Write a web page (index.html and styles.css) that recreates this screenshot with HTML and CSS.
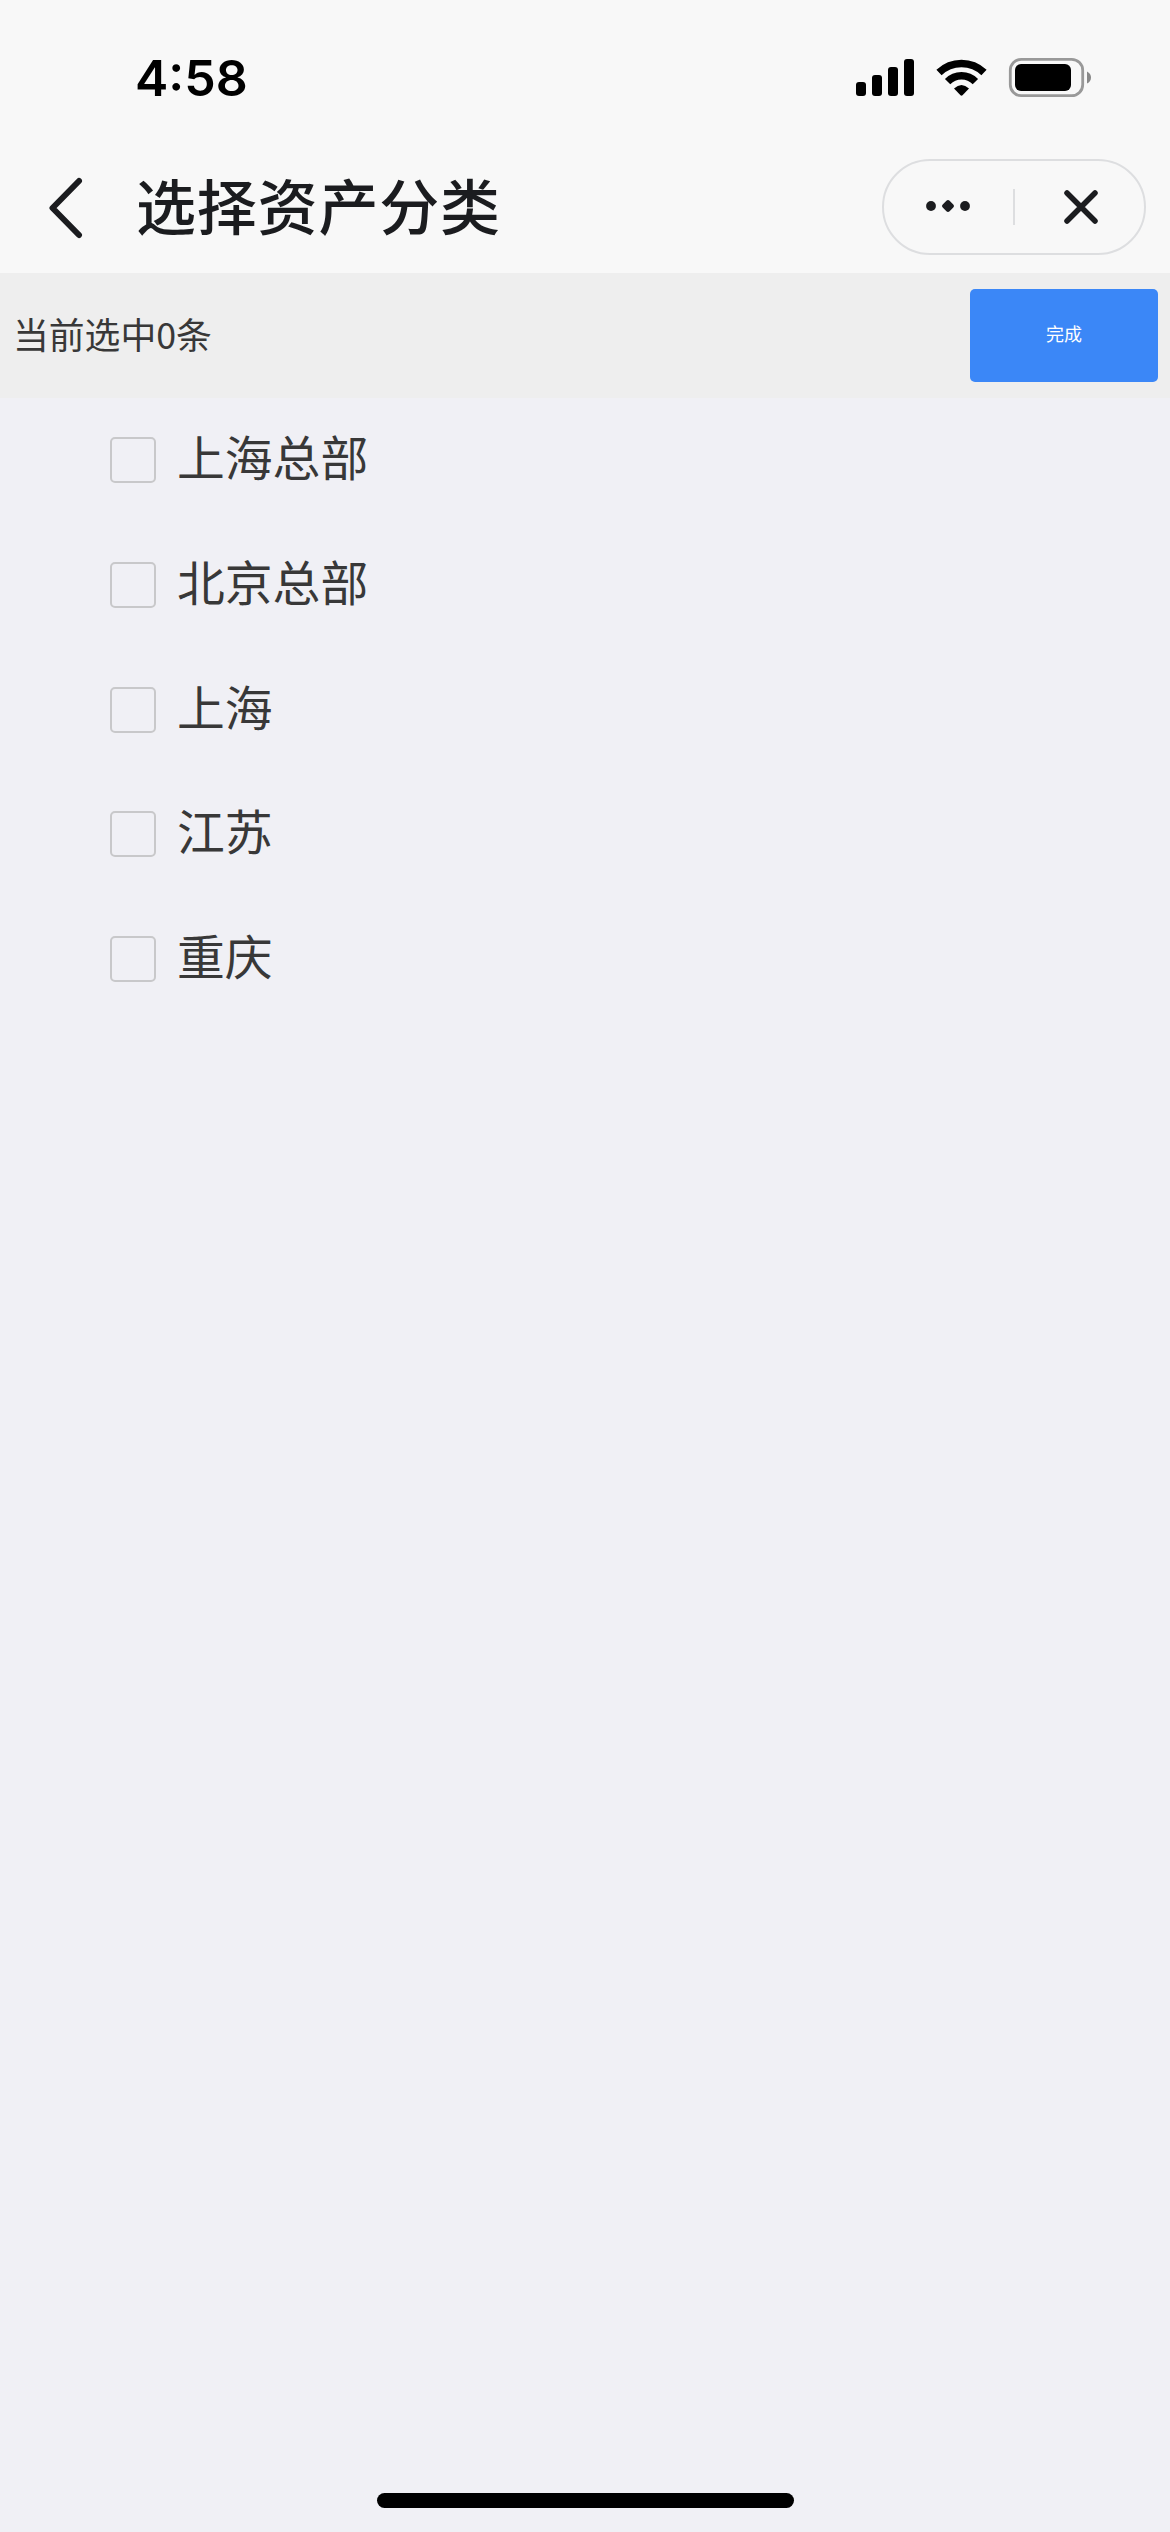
FILE: index.html
```
<!DOCTYPE html>
<html lang="zh-CN">
<head>
  <meta charset="UTF-8" />
  <meta name="viewport" content="width=device-width, initial-scale=1" />
  <title>选择资产分类</title>
  <link rel="stylesheet" href="styles.css">
</head>
<body>
  <div class="status-bar">
    <span class="time">4:58</span>
    <svg class="status-icons" width="240" height="44" viewBox="0 0 240 44">
      <!-- Signal -->
      <rect x="0" y="26" width="10" height="14" rx="3" />
      <rect x="16" y="19" width="10" height="21" rx="3" />
      <rect x="32" y="11" width="10" height="29" rx="3" />
      <rect x="48" y="3" width="10" height="37" rx="3" />
      <!-- Wifi -->
      <g fill="none" stroke="#000">
        <path d="M83 16.5 A32.5 32.5 0 0 1 128 16.5" stroke-width="7.5" />
        <path d="M91.6 25.6 A19.5 19.5 0 0 1 119.4 25.6" stroke-width="7.5" />
      </g>
      <path d="M98 32.5 Q105.5 25.5 113 32.5 L106.5 39.3 Q105.5 40.2 104.5 39.3 Z" />
      <!-- Battery -->
      <rect x="154.3" y="3.3" width="72.4" height="36.4" rx="11" fill="none" stroke="#999" stroke-width="2.8" />
      <rect x="159" y="8" width="56" height="27" rx="6" />
      <path d="M231 15.5 Q235 17.5 235 21.5 Q235 25.5 231 27.5 Z" fill="#888" />
    </svg>
  </div>

  <div class="nav-bar">
    <svg class="back" width="38" height="62" viewBox="0 0 38 62">
      <path d="M31 4 L4.5 31 L31 58" />
    </svg>
    <h1>选择资产分类</h1>
    <div class="capsule">
      <svg class="more" width="46" height="16" viewBox="0 0 46 16">
        <circle cx="6" cy="8" r="4.9" />
        <path d="M21.4 2.7 Q23 1.2 24.6 2.7 L28.3 6.4 Q29.9 8 28.3 9.6 L24.6 13.3 Q23 14.8 21.4 13.3 L17.7 9.6 Q16.1 8 17.7 6.4 Z" />
        <circle cx="40" cy="8" r="4.9" />
      </svg>
      <span class="divider"></span>
      <svg class="close" width="36" height="36" viewBox="0 0 36 36">
        <path d="M4 4 L32 32 M32 4 L4 32" />
      </svg>
    </div>
  </div>

  <div class="toolbar">
    <span class="count">当前选中0条</span>
    <button class="done-btn">完成</button>
  </div>

  <div class="list">
    <label class="item"><input type="checkbox" /><span>上海总部</span></label>
    <label class="item"><input type="checkbox" /><span>北京总部</span></label>
    <label class="item"><input type="checkbox" /><span>上海</span></label>
    <label class="item"><input type="checkbox" /><span>江苏</span></label>
    <label class="item"><input type="checkbox" /><span>重庆</span></label>
  </div>

  <div class="home-indicator"></div>
</body>
</html>
```

FILE: styles.css
```
* {
  box-sizing: border-box;
}
body {
  display: flex;
  flex-direction: column;
  height: 2532px;
  margin: 0;
  background-color: #f0f0f5;
  color: #383838;
  font-family: "Noto Sans CJK SC", sans-serif;
}

/* Header */
.status-bar {
  display: flex;
  justify-content: space-between;
  align-items: flex-start;
  height: 143px;
  padding: 56px 74px 0 135px;
  background-color: #f8f8f8;
}
.time {
  color: #000;
  font-family: Inter, sans-serif;
  font-size: 50px;
  font-weight: 600;
  line-height: 44px;
}
.nav-bar {
  display: flex;
  align-items: center;
  height: 130px;
  padding: 0 24px 0 48px;
  background-color: #f8f8f8;
}
.back {
  fill: none;
  stroke: #1b1c1f;
  stroke-width: 6;
  stroke-linecap: round;
  stroke-linejoin: round;
}
h1 {
  margin: 0 auto 9px 50px;
  color: #1b1c1f;
  font-size: 60px;
  font-weight: 500;
  letter-spacing: 0.8px;
  line-height: 80px;
}
.capsule {
  display: flex;
  align-items: center;
  width: 264px;
  height: 96px;
  margin-bottom: 2px;
  padding-left: 41px;
  border: 2px solid #dddee0;
  border-radius: 48px;
}
.more {
  margin-bottom: 3px;
  fill: #1b1c1f;
}
.divider {
  width: 2px;
  height: 36px;
  margin: 0 48px 0 42px;
  background: #dddee0;
}
.close {
  fill: none;
  stroke: #1b1c1f;
  stroke-width: 5.5;
  stroke-linecap: round;
}

/* Selected count and confirm button */
.toolbar {
  display: flex;
  justify-content: space-between;
  align-items: center;
  height: 125px;
  padding: 0 12px 0 13px;
  background-color: #eee;
}
.count {
  margin-bottom: 6px;
  font-size: 35.8px;
  line-height: 50px;
}
.done-btn {
  width: 188px;
  height: 93px;
  padding: 0 0 6px;
  border: none;
  border-radius: 5px;
  background: #3b87f7;
  color: #fff;
  font-family: inherit;
  font-size: 18px;
}

/* Options */
.list {
  display: flex;
  flex-direction: column;
}
.item {
  display: flex;
  align-items: center;
  height: 124.7px;
  padding-left: 110px;
}
.item input {
  appearance: none;
  width: 46px;
  height: 46px;
  margin: 0 21px 0 0;
  border: 2px solid #c8c8ca;
  border-radius: 5px;
}
.item span {
  margin-bottom: 8px;
  font-size: 47.8px;
  line-height: 60px;
}

.home-indicator {
  width: 417px;
  height: 15px;
  margin: auto auto 24px;
  border-radius: 8px;
  background: #000;
}
```
